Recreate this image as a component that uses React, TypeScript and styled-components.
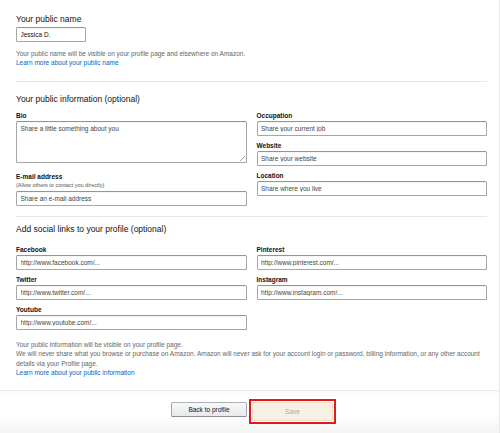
import React from "react";
import styled, { createGlobalStyle } from "styled-components";

const Global = createGlobalStyle`
  html, body { margin: 0; padding: 0; background: #fff; }
  body { font-family: "Liberation Sans", Arial, sans-serif; color: #111; }
  * { box-sizing: border-box; }
`;

const Page = styled.div`
  width: 500px;
  min-height: 433px;
  border-right: 1px solid #e7e7e7;
  display: flex;
  flex-direction: column;
`;

const Content = styled.div`
  padding: 14px 12px 0 16px;
`;

const Heading = styled.h2<{ $mt?: number }>`
  margin: ${(p) => p.$mt ?? 0}px 0 0 0;
  font-size: 8.5px;
  line-height: 11px;
  font-weight: 400;
  color: #111;
`;

const Divider = styled.hr<{ $mt: number }>`
  border: 0;
  border-top: 1px solid #e7e7e7;
  margin: ${(p) => p.$mt}px 0 0 0;
  height: 0;
`;

const Input = styled.input<{ $w?: number }>`
  display: block;
  width: ${(p) => (p.$w ? `${p.$w}px` : "100%")};
  height: 15px;
  padding: 0 3.5px;
  font-family: inherit;
  font-size: 6.5px;
  color: #111;
  background: #fff;
  border: 1px solid #a6a6a6;
  border-top-color: #949494;
  border-radius: 1.5px;
  box-shadow: 0 0.5px 0 rgba(0, 0, 0, 0.07) inset;
  outline: none;
  &::placeholder { color: #444; opacity: 1; }
`;

const TextArea = styled.textarea`
  display: block;
  width: 100%;
  height: 42px;
  padding: 3px 3.5px;
  font-family: inherit;
  font-size: 6.5px;
  color: #111;
  border: 1px solid #a6a6a6;
  border-top-color: #949494;
  border-radius: 1.5px;
  box-shadow: 0 0.5px 0 rgba(0, 0, 0, 0.07) inset;
  outline: none;
  resize: none;
  background-color: #fff;
  background-image: linear-gradient(
    135deg,
    transparent 0 46%,
    #a0a0a0 46% 54%,
    transparent 54% 72%,
    #a0a0a0 72% 80%,
    transparent 80%
  );
  background-size: 5px 5px;
  background-position: right 1px bottom 1px;
  background-repeat: no-repeat;
  &::placeholder { color: #444; opacity: 1; }
`;

const Help = styled.div<{ $mt?: number }>`
  margin-top: ${(p) => p.$mt ?? 0}px;
  font-size: 6.5px;
  line-height: 9.3px;
  color: #666;
`;

const Link = styled.a`
  display: block;
  font-size: 6.5px;
  line-height: 9.3px;
  color: #0066c0;
  text-decoration: none;
`;

const Grid = styled.div<{ $mt: number }>`
  margin-top: ${(p) => p.$mt}px;
  display: grid;
  grid-template-columns: 1fr 1fr;
  column-gap: 10px;
  align-items: start;
`;

const Column = styled.div`
  display: flex;
  flex-direction: column;
`;

const Field = styled.div<{ $mb?: number }>`
  margin-bottom: ${(p) => p.$mb ?? 5}px;
`;

const Label = styled.label`
  display: block;
  font-size: 6.5px;
  line-height: 9px;
  font-weight: 700;
  color: #111;
  margin-bottom: 1px;
`;

const SubLabel = styled.div`
  font-size: 5.5px;
  line-height: 9px;
  color: #555;
  margin-top: -1px;
  margin-bottom: 1px;
`;

const Footer = styled.div`
  margin-top: 12.5px;
  flex: 1;
  border-top: 1px solid #ececec;
  background: linear-gradient(to bottom, #fafafa 0, #fff 8px, #fff 55%, #f4f4f4 100%);
  display: flex;
  justify-content: center;
  align-items: flex-start;
  gap: 2px;
  padding: 8.5px 0 0 8px;
`;

const Highlight = styled.span`
  display: inline-flex;
  padding: 1px;
  border: 2px solid #e8171a;
`;

const Button = styled.button<{ $primary?: boolean }>`
  font-family: inherit;
  font-size: 6.5px;
  padding: 0;
  cursor: pointer;
  border-radius: 1.5px;
  ${(p) =>
    p.$primary
      ? `
    width: 81px;
    height: 19px;
    color: #a9a9a9;
    background: #f7f1e3;
    border: 1px solid #e9e1cc;
    border-radius: 1px;
  `
      : `
    margin-top: 3px;
    width: 76px;
    height: 15px;
    color: #111;
    background: linear-gradient(to bottom, #f7f8fa, #e7e9ec);
    border: 1px solid #adb1b8;
    border-color: #adb1b8 #a2a6ac #8d9096;
  `}
`;

const infoFields = [
  { label: "Occupation", ph: "Share your current job" },
  { label: "Website", ph: "Share your website" },
  { label: "Location", ph: "Share where you live" },
];

const socialLeft = [
  { label: "Facebook", ph: "http://www.facebook.com/..." },
  { label: "Twitter", ph: "http://www.twitter.com/..." },
  { label: "Youtube", ph: "http://www.youtube.com/..." },
];

const socialRight = [
  { label: "Pinterest", ph: "http://www.pinterest.com/..." },
  { label: "Instagram", ph: "http://www.instagram.com/..." },
];

export default function App() {
  return (
    <>
      <Global />
      <Page>
        <Content>
          <Heading>Your public name</Heading>
          <Input $w={70} defaultValue="Jessica D." style={{ marginTop: 2 }} />
          <Help $mt={6.5}>
            Your public name will be visible on your profile page and elsewhere on Amazon.
          </Help>
          <Link href="#">Learn more about your public name</Link>

          <Divider $mt={13.5} />
          <Heading $mt={12.5}>Your public information (optional)</Heading>
          <Grid $mt={6}>
            <Column>
              <Field $mb={9}>
                <Label>Bio</Label>
                <TextArea placeholder="Share a little something about you" />
              </Field>
              <Field>
                <Label>E-mail address</Label>
                <SubLabel>(Allow others to contact you directly)</SubLabel>
                <Input placeholder="Share an e-mail address" />
              </Field>
            </Column>
            <Column>
              {infoFields.map((f) => (
                <Field key={f.label}>
                  <Label>{f.label}</Label>
                  <Input placeholder={f.ph} />
                </Field>
              ))}
            </Column>
          </Grid>

          <Divider $mt={4.5} />
          <Heading $mt={7.5}>Add social links to your profile (optional)</Heading>
          <Grid $mt={10}>
            <Column>
              {socialLeft.map((f) => (
                <Field key={f.label}>
                  <Label>{f.label}</Label>
                  <Input placeholder={f.ph} />
                </Field>
              ))}
            </Column>
            <Column>
              {socialRight.map((f) => (
                <Field key={f.label}>
                  <Label>{f.label}</Label>
                  <Input placeholder={f.ph} />
                </Field>
              ))}
            </Column>
          </Grid>

          <Help $mt={5}>
            Your public information will be visible on your profile page.
            <br />
            We will never share what you browse or purchase on Amazon. Amazon will never ask for your
            account login or password, billing information, or any other account details via your
            Profile page.
          </Help>
          <Link href="#">Learn more about your public information</Link>
        </Content>
        <Footer>
          <Button>Back to profile</Button>
          <Highlight>
            <Button $primary>Save</Button>
          </Highlight>
        </Footer>
      </Page>
    </>
  );
}
